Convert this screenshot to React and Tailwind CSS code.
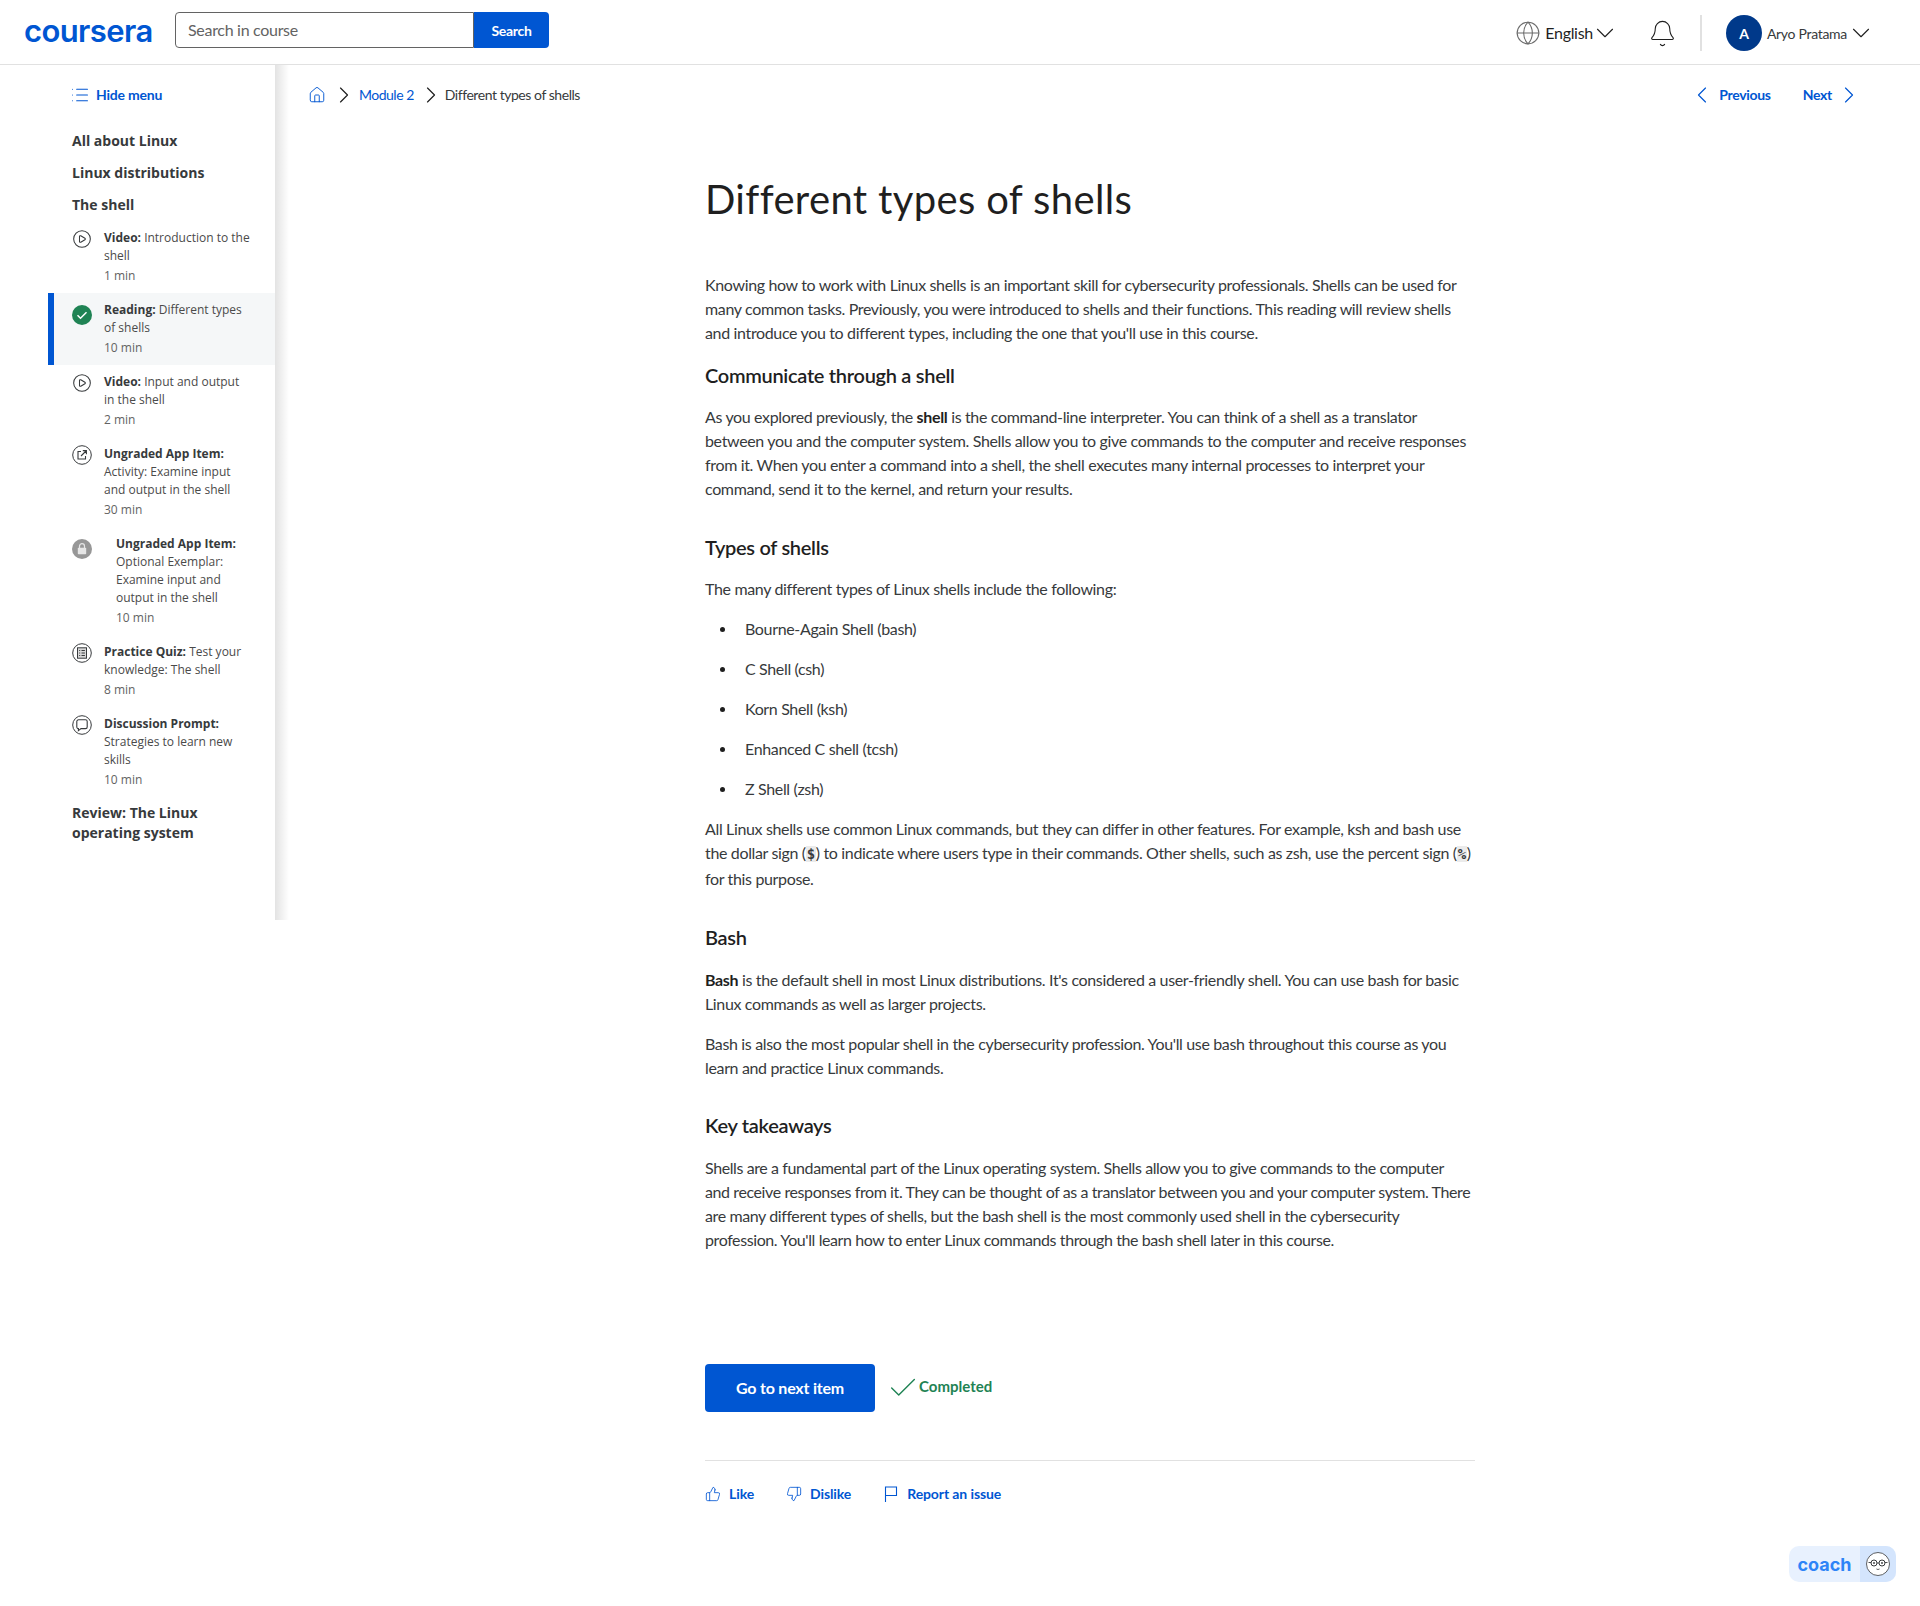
import {
    Bell,
    Check,
    ChevronDown,
    ChevronLeft,
    ChevronRight,
    CirclePlay,
    Globe,
    Home,
    List,
    ThumbsDown,
    ThumbsUp,
} from "lucide-react";

function AppItemIcon() {
    return (
        <svg viewBox="0 0 20 20" className="h-5 w-5 text-[#373a3c]" fill="none" stroke="currentColor">
            <circle cx="10" cy="10" r="9.3" strokeWidth="1" />
            <path d="M9 6.5H6v7.5h7.5v-3M9 11l5-5M10.8 5.6h3.6v3.6" strokeWidth="1.1" />
        </svg>
    );
}

function LockIcon() {
    return (
        <svg viewBox="0 0 20 20" className="mt-1 h-5 w-5">
            <circle cx="10" cy="10" r="10" fill="#979797" />
            <rect x="5.8" y="8.8" width="8.4" height="6.4" rx="0.8" fill="#e6e6e6" />
            <path d="M7.5 9V7.2a2.5 2.5 0 0 1 5 0V9" fill="none" stroke="#e6e6e6" strokeWidth="1.2" />
        </svg>
    );
}

function QuizIcon() {
    return (
        <svg viewBox="0 0 20 20" className="h-5 w-5 text-[#373a3c]" fill="none" stroke="currentColor">
            <circle cx="10" cy="10" r="9.3" strokeWidth="1" />
            <rect x="5.5" y="4.8" width="9" height="10.4" strokeWidth="1" fill="#d8d8d8" />
            <path d="M7.2 7.5h1M9.5 7.5h3.4M7.2 10h1M9.5 10h3.4M7.2 12.5h1M9.5 12.5h3.4" strokeWidth="1" />
        </svg>
    );
}

function DiscussionIcon() {
    return (
        <svg viewBox="0 0 20 20" className="h-5 w-5 text-[#373a3c]" fill="none" stroke="currentColor">
            <circle cx="10" cy="10" r="9.3" strokeWidth="1" />
            <path d="M6.5 4.8h7a1.7 1.7 0 0 1 1.7 1.7v5.4a1.7 1.7 0 0 1-1.7 1.7H9l-2.6 2v-2a1.6 1.6 0 0 1-1.6-1.7V6.5a1.7 1.7 0 0 1 1.7-1.7z" strokeWidth="1.1" />
        </svg>
    );
}

function DoneIcon() {
    return (
        <svg viewBox="0 0 20 20" className="mt-1 h-5 w-5">
            <circle cx="10" cy="10" r="10" fill="#1f8354" />
            <path d="M5.5 10.2l3 3 6-6" fill="none" stroke="#fff" strokeWidth="1.5" />
        </svg>
    );
}

function PlayIcon() {
    return <CirclePlay className="h-5 w-5 text-[#373a3c]" strokeWidth={1.25} />;
}

function FlagIcon() {
    return (
        <svg viewBox="0 0 14 16" className="ml-[33px] h-4 w-[14px]" fill="none" stroke="currentColor" strokeWidth="1.1">
            <path d="M1.5 16V1h11v8.5h-11" />
        </svg>
    );
}

const lessons = [
    { icon: PlayIcon, label: "Video:", title: "Introduction to the shell", time: "1 min" },
    { icon: DoneIcon, label: "Reading:", title: "Different types of shells", time: "10 min", active: true },
    { icon: PlayIcon, label: "Video:", title: "Input and output in the shell", time: "2 min" },
    { icon: AppItemIcon, label: "Ungraded App Item:", title: "Activity: Examine input and output in the shell", time: "30 min" },
    { icon: LockIcon, label: "Ungraded App Item:", title: "Optional Exemplar: Examine input and output in the shell", time: "10 min", locked: true },
    { icon: QuizIcon, label: "Practice Quiz:", title: "Test your knowledge: The shell", time: "8 min" },
    { icon: DiscussionIcon, label: "Discussion Prompt:", title: "Strategies to learn new skills", time: "10 min" },
];

function LessonRow({ lesson }) {
    const Icon = lesson.icon;
    return (
        <li
            className={
                lesson.active
                    ? "flex border-l-[6px] border-[#0056d2] bg-[#f5f7f8] pt-2 pb-2 pl-[18px] pr-[23px]"
                    : "flex border-l-[6px] border-transparent pt-2 pb-2 pl-[18px] pr-[23px]"
            }
        >
            <div className="w-8 shrink-0">
                <Icon />
            </div>
            <div className={lesson.locked ? "pl-3" : ""}>
                <p className="text-[12px] leading-[18px] text-[#4a4a4a]">
                    <span className="font-bold text-[#373a3c]">{lesson.label}</span> {lesson.title}
                </p>
                <p className="mt-[2px] text-[12px] leading-[18px] text-[#636363]">{lesson.time}</p>
            </div>
        </li>
    );
}

function Sidebar() {
    return (
        <aside className="flex h-[855px] w-[289px] shrink-0 font-['Open_Sans',sans-serif]">
            <nav className="w-[275px]">
                <a className="ml-[70px] mt-[20px] flex items-center gap-[6px] font-['Lato',sans-serif] text-[14px] font-bold leading-5 tracking-[-0.2px] text-[#0056d2]">
                    <List className="h-5 w-5" strokeWidth={1.25} />
                    Hide menu
                </a>
                <ul className="ml-[72px] mt-[26px] text-[14px] font-bold leading-5 text-[#373a3c]">
                    <li className="h-8">All about Linux</li>
                    <li className="h-8">Linux distributions</li>
                    <li className="h-[26px]">The shell</li>
                </ul>
                <ul className="ml-12">
                    {lessons.map((lesson) => (
                        <LessonRow key={lesson.label + lesson.time + lesson.title} lesson={lesson} />
                    ))}
                </ul>
                <p className="ml-[72px] mt-[6px] w-[160px] text-[14px] font-bold leading-5 text-[#373a3c]">
                    Review: The Linux operating system
                </p>
            </nav>
            <div className="w-[14px] bg-linear-to-r from-[#e3e3e3] to-white" />
        </aside>
    );
}

function Header() {
    return (
        <header className="flex h-[65px] items-center border-b border-[#e1e1e1] pl-6 pr-[44px] tracking-[-0.3px]">
            <span className="mb-[3px] w-[127px] font-['Inter',sans-serif] text-[31px] font-semibold leading-none tracking-[-0.6px] text-[#0056d2]">
                coursera
            </span>
            <div className="mb-1 ml-6 flex h-9">
                <div className="flex w-[299px] items-center rounded-l border border-[#636363] px-3 text-[16px] text-[#636363]">
                    Search in course
                </div>
                <button className="w-[75px] rounded-r bg-[#0056d2] text-[14px] font-bold text-white">Search</button>
            </div>
            <div className="ml-auto mt-[2px] flex items-center text-[#1f1f1f]">
                <Globe className="h-[26px] w-[26px] text-[#6b6b6b]" strokeWidth={1} />
                <span className="ml-1 text-[16px]">English</span>
                <ChevronDown className="-ml-[3px] h-[30px] w-[30px]" strokeWidth={0.9} />
                <Bell className="ml-[28px] h-[29px] w-[29px]" strokeWidth={0.9} />
                <div className="ml-[23px] h-9 w-[2px] bg-[#e1e1e1]" />
                <div className="ml-[24px] flex h-9 w-9 items-center justify-center rounded-full bg-[#00398a] text-[14px] font-bold text-white">
                    A
                </div>
                <span className="ml-[5px] text-[14px] text-[#373a3c]">Aryo Pratama</span>
                <ChevronDown className="-ml-[1px] h-[30px] w-[30px]" strokeWidth={0.9} />
            </div>
        </header>
    );
}

function TopNav() {
    return (
        <div className="flex h-[59px] items-center pl-[19px] pr-[57px] text-[14px]">
            <Home className="h-[18px] w-[18px] text-[#0056d2]" strokeWidth={1.25} />
            <ChevronRight className="ml-1 h-7 w-7 text-[#1f1f1f]" strokeWidth={1} />
            <a className="ml-[1px] tracking-[-0.5px] text-[#0056d2]">Module 2</a>
            <ChevronRight className="ml-[3px] h-7 w-7 text-[#1f1f1f]" strokeWidth={1} />
            <span className="tracking-[-0.45px] text-[#373a3c]">Different types of shells</span>
            <div className="ml-auto flex items-center font-bold tracking-[-0.3px] text-[#0056d2]">
                <ChevronLeft className="h-7 w-7" strokeWidth={1} />
                <span className="ml-[3px]">Previous</span>
                <span className="ml-8">Next</span>
                <ChevronRight className="ml-[3px] h-7 w-7" strokeWidth={1} />
            </div>
        </div>
    );
}

function Code({ children }) {
    return (
        <code className="bg-[#ebebeb] px-[1px] font-['DejaVu_Sans_Mono',monospace] text-[14px] font-bold leading-[26px]">
            {children}
        </code>
    );
}

function Article() {
    const shells = [
        "Bourne-Again Shell (bash)",
        "C Shell (csh)",
        "Korn Shell (ksh)",
        "Enhanced C shell (tcsh)",
        "Z Shell (zsh)",
    ];
    return (
        <article className="ml-[416px] w-[770px] text-[16px] leading-6 tracking-[-0.35px] text-[#373a3c]">
            <h1 className="mt-[49px] text-[40px] font-normal leading-[52px] tracking-[0.35px] text-[#1f1f1f]">
                Different types of shells
            </h1>
            <p className="mt-[48px]">
                Knowing how to work with Linux shells is an important skill for cybersecurity professionals. Shells can
                be used for many common tasks. Previously, you were introduced to shells and their functions. This
                reading will review shells and introduce you to different types, including the one that you'll use in
                this course.
            </p>
            <h2 className="mt-[16px] text-[20px] font-semibold leading-[28px] tracking-[-0.3px] text-[#1f1f1f]">
                Communicate through a shell
            </h2>
            <p className="mt-[16px]">
                As you explored previously, the <b className="text-[#1f1f1f]">shell</b> is the command-line interpreter.
                You can think of a shell as a translator between you and the computer system. Shells allow you to give
                commands to the computer and receive responses from it. When you enter a command into a shell, the
                shell executes many internal processes to interpret your command, send it to the kernel, and return
                your results.
            </p>
            <h2 className="mt-[32px] text-[20px] font-semibold leading-[28px] tracking-[-0.3px] text-[#1f1f1f]">
                Types of shells
            </h2>
            <p className="mt-[16px]">The many different types of Linux shells include the following:</p>
            <ul className="mt-[16px]">
                {shells.map((shell) => (
                    <li key={shell} className="mb-4 flex items-center pl-[15px]">
                        <span className="mr-5 h-[5px] w-[5px] rounded-full bg-[#1f1f1f]" />
                        {shell}
                    </li>
                ))}
            </ul>
            <p>
                All Linux shells use common Linux commands, but they can differ in other features. For example, ksh and
                bash use the dollar sign (<Code>$</Code>) to indicate where users type in their commands. Other shells,
                such as zsh, use the percent sign (<Code>%</Code>) for this purpose.
            </p>
            <h2 className="mt-[32px] text-[20px] font-semibold leading-[28px] tracking-[-0.3px] text-[#1f1f1f]">Bash</h2>
            <p className="mt-[17px]">
                <b className="text-[#1f1f1f]">Bash</b> is the default shell in most Linux distributions. It's considered
                a user-friendly shell. You can use bash for basic Linux commands as well as larger projects.
            </p>
            <p className="mt-[16px]">
                Bash is also the most popular shell in the cybersecurity profession. You'll use bash throughout this
                course as you learn and practice Linux commands.
            </p>
            <h2 className="mt-[31px] text-[20px] font-semibold leading-[28px] tracking-[-0.3px] text-[#1f1f1f]">
                Key takeaways
            </h2>
            <p className="mt-[17px] tracking-[-0.4px]">
                Shells are a fundamental part of the Linux operating system. Shells allow you to give commands to the
                computer
                <br />
                and receive responses from it. They can be thought of as a translator between you and your computer
                system. There are many different types of shells, but the bash shell is the most commonly used shell in
                the cybersecurity
                <br />
                profession. You'll learn how to enter Linux commands through the bash shell later in this course.
            </p>
            <div className="mt-[112px] flex items-center tracking-normal">
                <button className="h-12 w-[170px] rounded bg-[#0056d2] text-[16px] font-bold tracking-[-0.2px] text-white">
                    Go to next item
                </button>
                <Check className="ml-[11px] h-[34px] w-[34px] text-[#1f8354]" strokeWidth={1} />
                <span className="-ml-[1px] -translate-y-[2px] text-[15px] font-bold text-[#1f8354]">Completed</span>
            </div>
            <div className="mt-12 flex items-center border-t border-[#e1e1e1] pt-[23px] text-[14px] font-bold leading-5 tracking-[-0.1px] text-[#0056d2]">
                <ThumbsUp className="h-4 w-4" strokeWidth={1.25} />
                <span className="ml-2">Like</span>
                <ThumbsDown className="ml-8 h-4 w-4" strokeWidth={1.25} />
                <span className="ml-2">Dislike</span>
                <FlagIcon />
                <span className="ml-[9px]">Report an issue</span>
            </div>
        </article>
    );
}

function CoachBadge() {
    return (
        <div className="absolute left-[1789px] top-[1546px] flex h-9 w-[107px] overflow-hidden rounded-[10px] bg-[#e8f1fe]">
            <span className="flex w-[71px] items-center justify-center font-['Inter',sans-serif] text-[18px] font-bold text-[#2d84f7]">
                coach
            </span>
            <div className="flex w-9 items-center justify-center bg-[#d4e5fd]">
                <svg viewBox="0 0 24 24" className="h-6 w-6" fill="none" stroke="#373a3c">
                    <circle cx="12" cy="12" r="11.5" fill="#fff" strokeWidth="0.8" />
                    <circle cx="8" cy="11" r="3" strokeWidth="1" />
                    <circle cx="16" cy="11" r="3" strokeWidth="1" />
                    <path d="M11 11h2M2.5 10.5H5M19 10.5h2.5M10.5 17c1 .6 2 .6 3 0" strokeWidth="0.9" />
                    <circle cx="8" cy="11" r="0.9" fill="#373a3c" stroke="none" />
                    <circle cx="16" cy="11" r="0.9" fill="#373a3c" stroke="none" />
                </svg>
            </div>
        </div>
    );
}

export default function App() {
    return (
        <div className="relative min-h-[1606px] bg-white font-['Lato',sans-serif]">
            <Header />
            <div className="flex">
                <Sidebar />
                <main className="min-w-0 flex-1">
                    <TopNav />
                    <Article />
                </main>
            </div>
            <CoachBadge />
        </div>
    );
}
